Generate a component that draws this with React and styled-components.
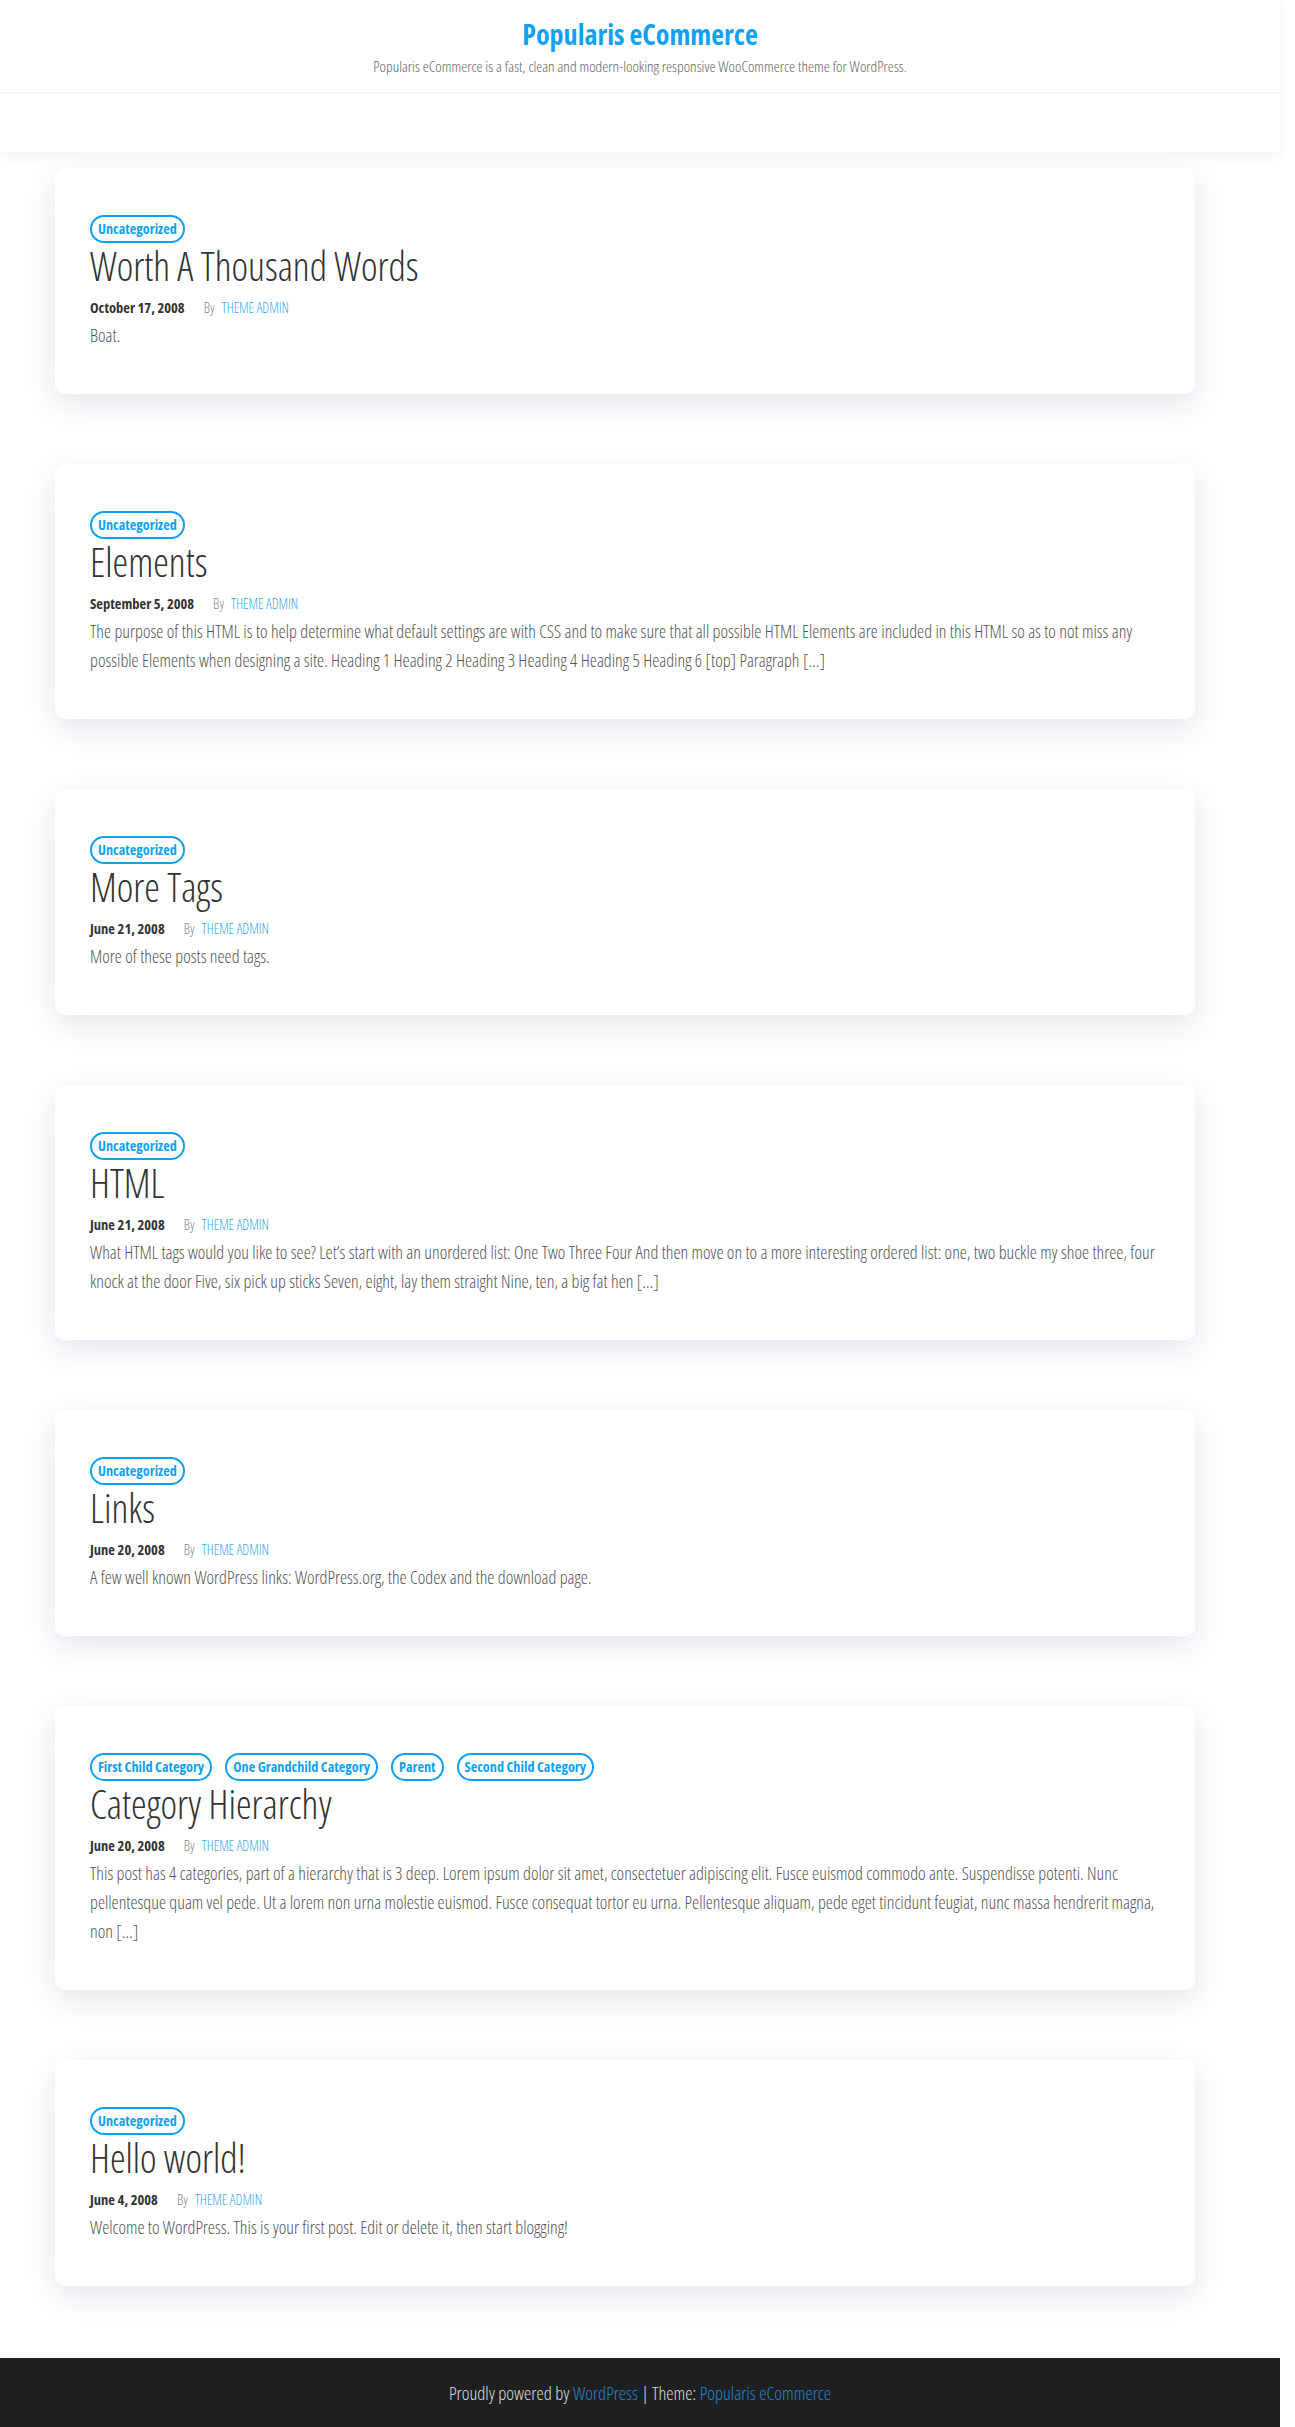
import React from "react";
import styled, { createGlobalStyle } from "styled-components";

const GlobalStyle = createGlobalStyle`
  html, body {
    margin: 0;
    padding: 0;
    background: #ffffff;
  }
  body {
    font-family: "Open Sans", "Liberation Sans Narrow", "DejaVu Sans Condensed", sans-serif;
    font-stretch: 75%;
    font-weight: 300;
    color: #555;
    -webkit-font-smoothing: antialiased;
  }
  * { box-sizing: border-box; }
  a { text-decoration: none; }
`;

const Page = styled.div`
  width: 1280px;
  display: flex;
  flex-direction: column;
`;

const Header = styled.header`
  background: #fff;
  box-shadow: 0 4px 12px rgba(40, 50, 90, 0.06);
  position: relative;
  z-index: 1;
`;

const Branding = styled.div`
  height: 93px;
  border-bottom: 1px solid #eef0f3;
  display: flex;
  flex-direction: column;
  align-items: center;
  padding-top: 15px;
`;

const SiteTitle = styled.a`
  font-size: 28px;
  font-weight: 700;
  line-height: 38px;
  color: #0ea2f6;
`;

const Tagline = styled.p`
  margin: 3px 0 0;
  font-size: 15.3px;
  line-height: 20px;
  color: #666;
`;

const Nav = styled.nav`
  height: 59px;
`;

const Main = styled.main`
  padding: 16px 0 2px 55px;
  display: flex;
  flex-direction: column;
`;

const Card = styled.article`
  width: 1140px;
  background: #fff;
  border-radius: 10px;
  box-shadow: 0 10px 32px rgba(55, 65, 130, 0.13);
  padding: 47px 35px 44px;
  margin-bottom: 70px;
  display: flex;
  flex-direction: column;
`;

const Tags = styled.div`
  display: flex;
  gap: 13px;
`;

const Tag = styled.a`
  height: 28px;
  border: 2px solid #0ea2f6;
  border-radius: 14px;
  padding: 0 6px;
  font-size: 14.2px;
  font-weight: 700;
  line-height: 24px;
  color: #0ea2f6;
`;

const Title = styled.h2`
  margin: 0;
  font-size: 39.5px;
  font-weight: 300;
  line-height: 46px;
  color: #333;
`;

const Meta = styled.div`
  margin-top: 9px;
  height: 20px;
  display: flex;
  align-items: center;
  font-size: 14px;
  line-height: 20px;
`;

const DateText = styled.span`
  font-weight: 700;
  font-size: 14.5px;
  color: #333;
  margin-right: 19px;
`;

const By = styled.span`
  color: #888;
  margin-right: 7px;
`;

const Author = styled.a`
  color: #35a9f5;
`;

const Excerpt = styled.p`
  margin: 3px 0 0;
  font-size: 18px;
  line-height: 29px;
  color: #555;
`;

const Footer = styled.footer`
  height: 69px;
  background: #1f1f1f;
  display: flex;
  align-items: center;
  justify-content: center;
  font-size: 18.4px;
  color: #ddd;
`;

const FooterLink = styled.a`
  color: #1e86d6;
`;

const posts = [
  {
    tags: ["Uncategorized"],
    title: "Worth A Thousand Words",
    date: "October 17, 2008",
    excerpt: "Boat.",
  },
  {
    tags: ["Uncategorized"],
    title: "Elements",
    date: "September 5, 2008",
    excerpt:
      "The purpose of this HTML is to help determine what default settings are with CSS and to make sure that all possible HTML Elements are included in this HTML so as to not miss any possible Elements when designing a site. Heading 1 Heading 2 Heading 3 Heading 4 Heading 5 Heading 6 [top] Paragraph […]",
  },
  {
    tags: ["Uncategorized"],
    title: "More Tags",
    date: "June 21, 2008",
    excerpt: "More of these posts need tags.",
  },
  {
    tags: ["Uncategorized"],
    title: "HTML",
    date: "June 21, 2008",
    excerpt:
      "What HTML tags would you like to see? Let’s start with an unordered list: One Two Three Four And then move on to a more interesting ordered list: one, two buckle my shoe three, four knock at the door Five, six pick up sticks Seven, eight, lay them straight Nine, ten, a big fat hen […]",
  },
  {
    tags: ["Uncategorized"],
    title: "Links",
    date: "June 20, 2008",
    excerpt:
      "A few well known WordPress links: WordPress.org, the Codex and the download page.",
  },
  {
    tags: [
      "First Child Category",
      "One Grandchild Category",
      "Parent",
      "Second Child Category",
    ],
    title: "Category Hierarchy",
    date: "June 20, 2008",
    excerpt:
      "This post has 4 categories, part of a hierarchy that is 3 deep. Lorem ipsum dolor sit amet, consectetuer adipiscing elit. Fusce euismod commodo ante. Suspendisse potenti. Nunc pellentesque quam vel pede. Ut a lorem non urna molestie euismod. Fusce consequat tortor eu urna. Pellentesque aliquam, pede eget tincidunt feugiat, nunc massa hendrerit magna, non […]",
  },
  {
    tags: ["Uncategorized"],
    title: "Hello world!",
    date: "June 4, 2008",
    excerpt:
      "Welcome to WordPress. This is your first post. Edit or delete it, then start blogging!",
  },
];

export default function App() {
  return (
    <>
      <GlobalStyle />
      <Page>
        <Header>
          <Branding>
            <SiteTitle href="#">Popularis eCommerce</SiteTitle>
            <Tagline>
              Popularis eCommerce is a fast, clean and modern-looking responsive
              WooCommerce theme for WordPress.
            </Tagline>
          </Branding>
          <Nav />
        </Header>
        <Main>
          {posts.map((p) => (
            <Card key={p.title}>
              <Tags>
                {p.tags.map((t) => (
                  <Tag key={t} href="#">
                    {t}
                  </Tag>
                ))}
              </Tags>
              <Title>{p.title}</Title>
              <Meta>
                <DateText>{p.date}</DateText>
                <By>By</By>
                <Author href="#">THEME ADMIN</Author>
              </Meta>
              <Excerpt>{p.excerpt}</Excerpt>
            </Card>
          ))}
        </Main>
        <Footer>
          <span>
            Proudly powered by <FooterLink href="#">WordPress</FooterLink> | Theme:{" "}
            <FooterLink href="#">Popularis eCommerce</FooterLink>
          </span>
        </Footer>
      </Page>
    </>
  );
}
